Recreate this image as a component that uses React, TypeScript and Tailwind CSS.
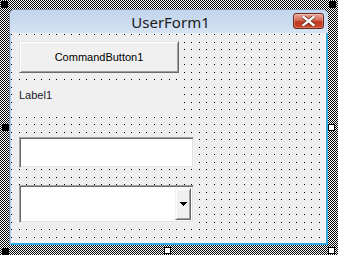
import React from "react";

const Handle = ({ cls, filled }: { cls: string; filled: boolean }) => (
  <div
    className={`absolute w-[7px] h-[7px] ${filled ? "bg-black" : "bg-white border border-black"} ${cls}`}
  />
);

export default function App() {
  return (
    <div className="relative w-[338px] h-[255px] overflow-hidden bg-white pl-[9px] pt-[9px] pr-[10px] pb-[10px] font-['Liberation_Sans',Arial,sans-serif]">
      <svg className="absolute inset-0 w-full h-full" shapeRendering="crispEdges">
        <defs>
          <pattern id="hatch" x="0" y="0" width="2" height="2" patternUnits="userSpaceOnUse">
            <rect x="0" y="0" width="1" height="1" fill="#000" />
            <rect x="1" y="1" width="1" height="1" fill="#000" />
          </pattern>
        </defs>
        <rect width="100%" height="100%" fill="url(#hatch)" />
      </svg>
      <div className="relative flex flex-col w-full h-full rounded-t-[6px] overflow-hidden border border-[#7f93ad] border-b-0 border-r-0 bg-[#f0f0f0]">
        {/* Title bar */}
        <div className="relative flex items-center justify-center h-[23px] shrink-0 bg-[linear-gradient(180deg,#c3d5ec_0%,#c9daee_45%,#d6e3f3_100%)]">
          <span className="text-[15px] leading-none text-[#1a1a1a] font-['Noto_Sans','Open_Sans',sans-serif] pt-[1px] pl-[3px]">
            UserForm1
          </span>
          <div className="absolute right-[4px] top-[3px] w-[31px] h-[16px] rounded-[3px] border border-[#6a2a1f] bg-[linear-gradient(180deg,#e9a99a_0%,#d56a55_45%,#c0381f_55%,#c8482e_100%)] flex items-center justify-center shadow-[inset_0_0_0_1px_rgba(255,255,255,0.25)]">
            <svg width="13" height="10" viewBox="0 0 13 10">
              <path
                d="M1.5 1 L11.5 9 M11.5 1 L1.5 9"
                stroke="#5a2a22"
                strokeWidth="4"
                strokeLinecap="square"
              />
              <path
                d="M1.5 1 L11.5 9 M11.5 1 L1.5 9"
                stroke="#ffffff"
                strokeWidth="2.4"
                strokeLinecap="square"
              />
            </svg>
          </div>
        </div>
        {/* Client area */}
        <div className="relative flex-1 flex flex-col items-start pl-[8px] border-l border-l-[#a9c8ea] border-r-2 border-r-[#33aae4] border-b-2 border-b-[#33aae4] bg-[#efefef]">
          <svg className="absolute inset-0 w-full h-full" shapeRendering="crispEdges">
            <defs>
              <pattern id="dots" x="0" y="1" width="15" height="15" patternUnits="userSpaceOnUse">
                <rect x="0" y="0" width="1" height="1" fill="#000" />
                <rect x="8" y="0" width="1" height="1" fill="#000" />
                <rect x="0" y="8" width="1" height="1" fill="#000" />
                <rect x="8" y="8" width="1" height="1" fill="#000" />
              </pattern>
            </defs>
            <rect width="100%" height="100%" fill="url(#dots)" />
          </svg>

          {/* CommandButton1 */}
          <div className="relative mt-[8px] w-[160px] h-[32px] flex items-center justify-center bg-[#f0f0f0] border border-t-[#e3e3e3] border-l-[#e3e3e3] border-b-[#696969] border-r-[#696969] shadow-[inset_1px_1px_0_#fff,inset_-1px_-1px_0_#a0a0a0] text-[11px] text-black">
            CommandButton1
          </div>

          {/* Label1 */}
          <div className="relative mt-[10px] w-[158px] h-[34px] bg-[#f0f0f0] pt-[6px] text-[11px] leading-[13px] text-[#1a1a2e]">
            Label1
          </div>

          {/* TextBox */}
          <div className="relative mt-[20px] w-[175px] h-[31px] bg-white border border-t-[#a0a0a0] border-l-[#a0a0a0] border-b-[#f0f0f0] border-r-[#f0f0f0] shadow-[inset_1px_1px_0_#696969,inset_-1px_-1px_0_#e3e3e3]" />

          {/* ComboBox */}
          <div className="relative mt-[17px] w-[175px] h-[38px] flex bg-white border border-t-[#a0a0a0] border-l-[#a0a0a0] border-b-[#f0f0f0] border-r-[#f0f0f0] shadow-[inset_1px_1px_0_#696969,inset_-1px_-1px_0_#e3e3e3] p-[2px]">
            <div className="flex-1" />
            <div className="w-[16px] h-full flex items-center justify-center bg-[#f0f0f0] border border-t-[#f0f0f0] border-l-[#f0f0f0] border-b-[#696969] border-r-[#696969] shadow-[inset_1px_1px_0_#fff,inset_-1px_-1px_0_#a0a0a0]">
              <svg width="7" height="4" viewBox="0 0 7 4" shapeRendering="crispEdges">
                <path d="M0 0 H7 L3.5 4 Z" fill="#000" />
              </svg>
            </div>
          </div>
        </div>
      </div>

      <Handle cls="left-[1px] top-[1px]" filled />
      <Handle cls="left-[329px] top-[1px]" filled />
      <Handle cls="left-[2px] top-[124px]" filled />
      <Handle cls="left-[2px] top-[248px]" filled />
      <Handle cls="left-[164px] top-[247px]" filled={false} />
      <Handle cls="left-[328px] top-[247px]" filled={false} />
      <Handle cls="left-[328px] top-[124px]" filled={false} />
    </div>
  );
}
